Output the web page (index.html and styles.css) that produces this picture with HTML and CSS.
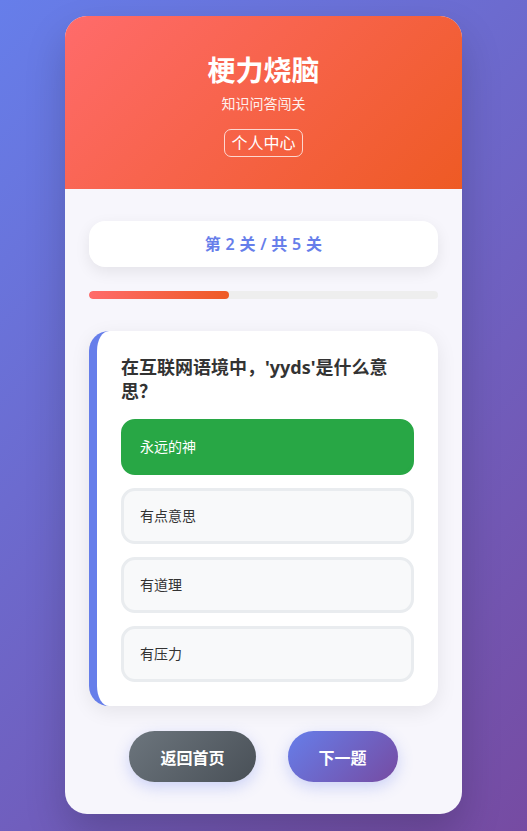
FILE: index.html
```html
<!DOCTYPE html>
<html lang="zh-CN">
<head>
<meta charset="utf-8">
<title>梗力烧脑</title>
<link rel="stylesheet" href="styles.css">
</head>
<body>
<div class="app">
  <header class="header">
    <h1 class="title">梗力烧脑</h1>
    <p class="subtitle">知识问答闯关</p>
    <button class="profile-btn">个人中心</button>
  </header>
  <main class="content">
    <div class="level-box">第 2 关 / 共 5 关</div>
    <div class="progress"><div class="progress-fill" style="width:40%"></div></div>
    <section class="question-card">
      <h2 class="question">在互联网语境中，'yyds'是什么意思？</h2>
      <div class="options">
        <div class="option selected">永远的神</div>
        <div class="option">有点意思</div>
        <div class="option">有道理</div>
        <div class="option">有压力</div>
      </div>
    </section>
    <div class="actions">
      <button class="btn btn-gray">返回首页</button>
      <button class="btn btn-primary">下一题</button>
    </div>
  </main>
</div>
</body>
</html>
```

FILE: styles.css
```css
html {
  min-height: 100%;
  background: linear-gradient(135deg, #667eea 0%, #764ba2 100%);
}
body {
  margin: 0;
  padding: 16px 0 18px;
  font-family: "Noto Sans", "Noto Sans CJK SC", sans-serif;
  color: #333;
}
.app {
  width: 397px;
  margin: 0 auto;
  background: #f7f6fc;
  border-radius: 22px;
  overflow: hidden;
  box-shadow: 0 20px 40px rgba(0, 0, 0, 0.18);
}
.header {
  background: linear-gradient(135deg, #ff6b6b 0%, #ee5a24 100%);
  color: #fff;
  text-align: center;
  padding: 36px 20px 32px;
}
.title {
  margin: 0;
  font-size: 28px;
  line-height: 36px;
  font-weight: 700;
}
.subtitle {
  margin: 6px 0 0;
  font-size: 14px;
  line-height: 20px;
  opacity: 0.9;
}
.profile-btn {
  margin-top: 15px;
  background: transparent;
  color: #fff;
  border: 1px solid rgba(255, 255, 255, 0.75);
  border-radius: 7px;
  padding: 2px 6px;
  font-family: inherit;
  font-size: 16px;
  line-height: 22px;
}
.content {
  padding: 32px 24px 32px;
}
.level-box {
  background: #fff;
  border-radius: 16px;
  padding: 12px;
  text-align: center;
  color: #667eea;
  font-weight: 600;
  font-size: 16px;
  line-height: 22px;
  letter-spacing: 0.3px;
  box-shadow: 0 5px 15px rgba(0, 0, 0, 0.08);
}
.progress {
  margin-top: 24px;
  height: 8px;
  border-radius: 4px;
  background: #eeeeee;
  overflow: hidden;
}
.progress-fill {
  height: 100%;
  border-radius: 4px;
  background: linear-gradient(90deg, #ff6b6b, #ee5a24);
}
.question-card {
  margin-top: 32px;
  background: #fff;
  border-left: 8px solid #667eea;
  border-radius: 20px;
  padding: 24px 24px 24px;
  box-shadow: 0 5px 20px rgba(0, 0, 0, 0.08);
}
.question {
  margin: 0 0 16px;
  font-size: 18px;
  line-height: 24px;
  font-weight: 700;
  color: #333;
}
.options {
  display: flex;
  flex-direction: column;
  gap: 13px;
}
.option {
  background: #f8f9fa;
  border: 3px solid #e9ecef;
  border-radius: 14px;
  padding: 16px 16px;
  font-size: 14px;
  line-height: 18px;
  color: #333;
}
.option.selected {
  background: #28a745;
  border-color: #28a745;
  color: #fff;
}
.actions {
  margin-top: 25px;
  display: flex;
  justify-content: center;
  gap: 32px;
}
.btn {
  border: none;
  border-radius: 26px;
  height: 51px;
  padding: 0 31px;
  color: #fff;
  font-family: inherit;
  font-size: 16px;
  font-weight: 700;
  box-shadow: 0 5px 15px rgba(102, 126, 234, 0.3);
}
.btn-gray {
  background: linear-gradient(135deg, #6c757d 0%, #495057 100%);
}
.btn-primary {
  background: linear-gradient(135deg, #667eea 0%, #764ba2 100%);
}
```
